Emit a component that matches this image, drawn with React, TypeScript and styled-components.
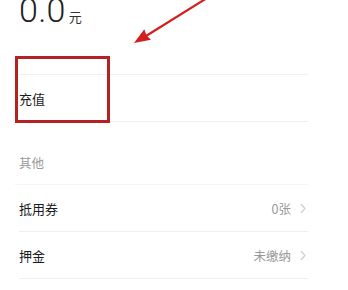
import styled, { createGlobalStyle } from "styled-components";

const GlobalStyle = createGlobalStyle`
  html, body {
    margin: 0;
    padding: 0;
    background: #ffffff;
  }
  body {
    font-family: "Noto Sans CJK SC", "Noto Sans", sans-serif;
    overflow: hidden;
  }
`;

const Page = styled.div`
  position: relative;
  width: 348px;
  height: 290px;
  overflow: hidden;
  background: #fff;
`;

const Balance = styled.div`
  display: flex;
  align-items: baseline;
  padding-left: 19px;
  margin-top: -6px;
  margin-bottom: 48px;
  height: 32px;
  line-height: 32px;
  color: #222;
`;

const Amount = styled.span`
  font-family: Roboto, "Liberation Sans", sans-serif;
  font-weight: 300;
  font-size: 34px;
  letter-spacing: 0.3px;
`;

const Unit = styled.span`
  font-size: 13px;
  margin-left: 3px;
  color: #333;
`;

const List = styled.div`
  display: flex;
  flex-direction: column;
  margin: 0 40px 0 19px;
  border-top: 1px solid #f2f2f2;
`;

const Row = styled.div`
  display: flex;
  align-items: center;
  justify-content: space-between;
  padding-top: 1px;
  box-sizing: border-box;
  height: 47px;
  border-bottom: 1px solid #efefef;
  font-size: 13px;
  color: #1a1a1a;
`;

const SectionTitle = styled.div`
  display: flex;
  align-items: flex-end;
  height: 63px;
  padding-bottom: 12px;
  box-sizing: border-box;
  border-bottom: 1px solid #f4f4f4;
  font-size: 12.5px;
  color: #999;
  margin-left: -4px;
  padding-left: 4px;
`;

const Value = styled.span`
  display: flex;
  align-items: center;
  gap: 9px;
  color: #999;
  font-size: 12.5px;
`;

const Chevron = styled.svg`
  width: 6px;
  height: 11px;
  margin-right: 2px;
`;

const Highlight = styled.div`
  position: absolute;
  left: 15px;
  top: 56px;
  width: 95px;
  height: 67px;
  box-sizing: border-box;
  border: 3px solid #b52222;
`;

const Arrow = styled.svg`
  position: absolute;
  left: 0;
  top: 0;
  width: 348px;
  height: 60px;
  pointer-events: none;
`;

const Arrowhead = () => (
  <Chevron viewBox="0 0 6 11">
    <path d="M1 1 L5 5.5 L1 10" fill="none" stroke="#cfcfcf" strokeWidth="1.2" />
  </Chevron>
);

const rows = [
  { label: "抵用券", value: "0张" },
  { label: "押金", value: "未缴纳" },
];

export default function App() {
  return (
    <Page>
      <GlobalStyle />
      <Balance>
        <Amount>0.0</Amount>
        <Unit>元</Unit>
      </Balance>
      <List>
        <Row>
          <span>充值</span>
        </Row>
        <SectionTitle>其他</SectionTitle>
        {rows.map((r) => (
          <Row key={r.label}>
            <span>{r.label}</span>
            <Value>
              {r.value}
              <Arrowhead />
            </Value>
          </Row>
        ))}
      </List>
      <Highlight />
      <Arrow viewBox="0 0 348 60">
        <line x1="207" y1="-2" x2="146" y2="36" stroke="#d41f1f" strokeWidth="2.2" />
        <polygon points="134,43 144.3,29.3 146.5,35.5 151,39.8" fill="#d41f1f" />
      </Arrow>
    </Page>
  );
}
